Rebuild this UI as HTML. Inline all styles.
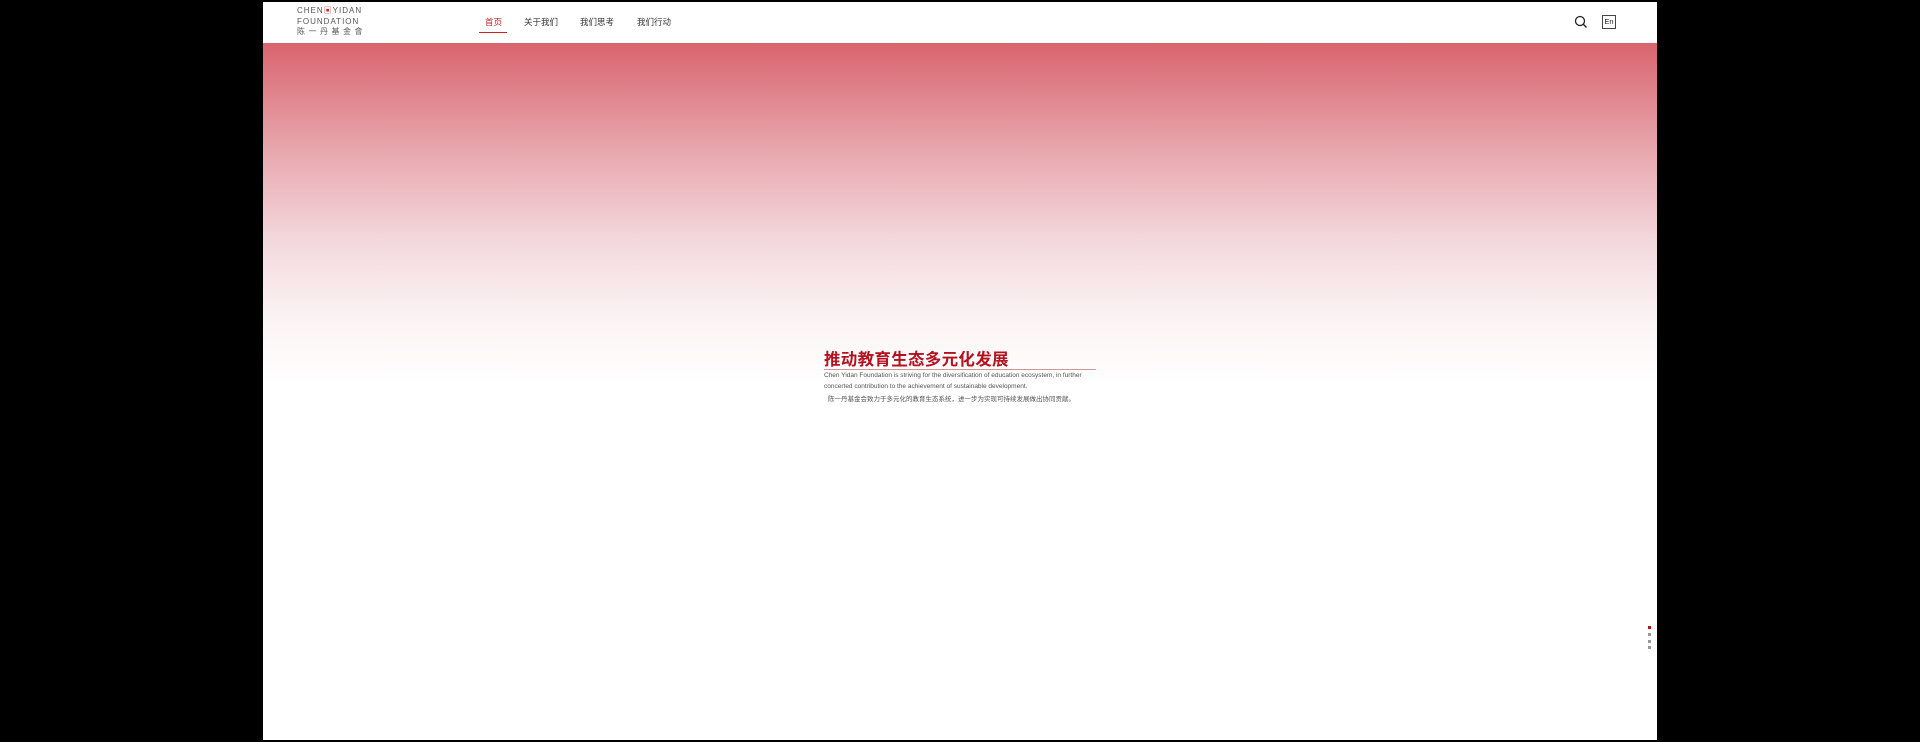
<!DOCTYPE html>
<html><head><meta charset="utf-8"><style>
body{margin:0;width:1920px;height:742px;background:#000;position:relative;overflow:hidden;font-family:"Liberation Sans","Noto Sans CJK SC",sans-serif}
#pg{position:absolute;left:263px;top:2px;width:1394px;height:738px;background:#fff;overflow:hidden}
#hd{position:absolute;left:0;top:0;width:100%;height:41px;background:#fff}
#hero{position:absolute;left:0;top:41px;width:100%;height:340px;background:linear-gradient(#d9646e 0%,#e7a4ab 30%,#f3d8dc 58%,#fbf2f3 80%,#fff 100%)}
.logo{position:absolute;left:34px;top:4px;font-size:8px;letter-spacing:1px;line-height:10.5px;color:#555}
.nav{position:absolute;top:14px;font-size:8.5px;color:#333}
.t{position:absolute;left:561px;top:344px;font-size:16.5px;font-weight:bold;color:#b5121f;letter-spacing:0.3px}
.ln{position:absolute;left:561px;top:367px;width:272px;height:1px;background:#c99}
.e{position:absolute;left:561px;font-size:6.5px;color:#555;white-space:nowrap}
.d{position:absolute;left:1385px;width:3px;height:3px;background:#999}
</style></head><body><div id="pg">
<div id="hd">
<div class="logo">CHEN<span style="color:#c22">▣</span>YIDAN<br>FOUNDATION<br><span style="letter-spacing:3.5px">陈一丹基金會</span></div>
<div class="nav" style="left:222px;color:#c22">首页</div>
<div style="position:absolute;left:216px;top:30px;width:28px;height:1px;background:#c22"></div>
<div class="nav" style="left:261px">关于我们</div>
<div class="nav" style="left:317px">我们思考</div>
<div class="nav" style="left:374px">我们行动</div>
<svg style="position:absolute;left:1311px;top:13px" width="14" height="14" viewBox="0 0 14 14"><circle cx="6" cy="6" r="4.5" fill="none" stroke="#222" stroke-width="1.3"/><path d="M9.3 9.3L12.5 12.5" stroke="#222" stroke-width="1.4"/></svg>
<div style="position:absolute;left:1339px;top:13px;width:12px;height:12px;border:1px solid #444;font-size:7.5px;line-height:12px;text-align:center;color:#222">En</div>
</div>
<div id="hero"></div>
<div class="t">推动教育生态多元化发展</div>
<div class="ln"></div>
<div class="e" style="top:370px">Chen Yidan Foundation is striving for the diversification of education ecosystem, in further</div>
<div class="e" style="top:381px">concerted contribution to the achievement of sustainable development.</div>
<div class="e" style="top:391px;left:565px">陈一丹基金会致力于多元化的教育生态系统，进一步为实现可持续发展做出协同贡献。</div>
<div class="d" style="top:624px;background:#b5121f"></div>
<div class="d" style="top:631px"></div>
<div class="d" style="top:638px"></div>
<div class="d" style="top:644px"></div>
</div></body></html>
